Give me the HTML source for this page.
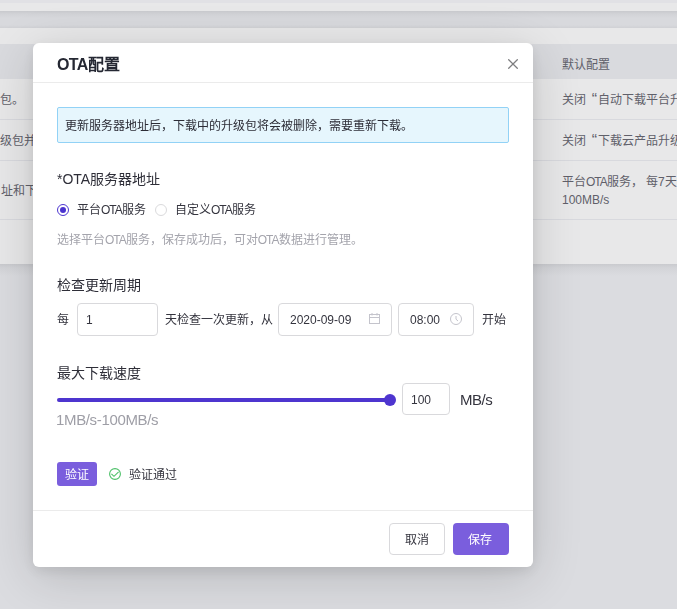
<!DOCTYPE html>
<html lang="zh-CN">
<head>
<meta charset="utf-8">
<style>
*{box-sizing:border-box;margin:0;padding:0}
html,body{width:677px;height:609px;overflow:hidden}
body{position:relative;background:#dbdce0;font-family:"Liberation Sans",sans-serif;font-size:12px;color:#34343e}
.abs{position:absolute;white-space:nowrap}
.bg{position:absolute;left:0;width:677px}
.t{position:absolute;white-space:nowrap;line-height:16px}
.modal{will-change:transform;position:absolute;left:33px;top:43px;width:500px;height:524px;background:#fff;border-radius:6px;box-shadow:0 4px 14px rgba(0,0,0,.09),0 10px 50px rgba(0,0,0,.16)}
.q{display:inline-block;width:12px;text-align:right;padding-right:1px;font-size:16px;line-height:16px;vertical-align:top}
.o{letter-spacing:-1px}
.box{position:absolute;border:1px solid #d9d9dc;border-radius:4px;background:#fff}
</style>
</head>
<body>
<!-- background page (under mask) -->
<div class="bg" style="top:0;height:3px;background:#e1e1e5"></div>
<div class="bg" style="top:3px;height:8px;background:#e8e8e9"></div>
<div class="bg" style="top:11px;height:17px;background:linear-gradient(#c8c9cd 0,#d2d3d7 3px,#d8d9dd 7px,#d8d9dd 14px,#d0d1d5 17px)"></div>
<div class="bg" style="top:28px;height:236px;background:#e8e8e9"></div>
<div class="bg" style="top:44px;height:35px;background:#d9dade"></div>
<div class="bg" style="top:119px;height:1px;background:#d8d9de"></div>
<div class="bg" style="top:160px;height:1px;background:#d8d9de"></div>
<div class="bg" style="top:219px;height:1px;background:#d8d9de"></div>
<div class="bg" style="top:264px;height:12px;background:linear-gradient(#c9cace 0,#d3d4d8 4px,#dbdce0 12px)"></div>

<div class="t" style="left:0;top:92px;color:#60606a">包。</div>
<div class="t" style="left:0;top:133px;color:#60606a">级包并</div>
<div class="t" style="left:1px;top:183px;color:#60606a">址和下</div>

<div class="t" style="left:562px;top:57px;color:#60606a">默认配置</div>
<div class="t" style="left:562px;top:92px;color:#60606a">关闭<span class="q">“</span>自动下载平台升级包</div>
<div class="t" style="left:562px;top:133px;color:#60606a">关闭<span class="q">“</span>下载云产品升级包</div>
<div class="t" style="left:562px;top:174px;color:#60606a">平台<span class="o">OTA</span>服务， 每7天</div>
<div class="t" style="left:562px;top:192px;color:#60606a">100MB/s</div>

<div class="modal">
  <div class="t" style="left:24px;top:12px;font-size:16px;line-height:20px;font-weight:bold;color:#252833"><span style="letter-spacing:-0.7px">OTA</span>配置</div>
  <svg class="abs" style="left:475px;top:16px" width="10" height="10" viewBox="0 0 10 10"><path d="M0.3 0.3L9.7 9.7M9.7 0.3L0.3 9.7" stroke="#7e7e80" stroke-width="1.25" fill="none"/></svg>
  <div class="abs" style="left:0;top:39px;width:500px;height:1px;background:#ebebeb"></div>

  <div class="abs" style="left:24px;top:64px;width:452px;height:36px;background:#e6f6fd;border:1px solid #92d2f6;border-radius:2px"></div>
  <div class="t" style="left:32.2px;top:75px;color:#2c2c36">更新服务器地址后，下载中的升级包将会被删除，需要重新下载。</div>

  <div class="t" style="left:24px;top:127px;font-size:14px;line-height:18px;color:#2e2e38">*OTA服务器地址</div>
  <div class="abs" style="left:24px;top:161px;width:12px;height:12px;border:1px solid #4d36d0;border-radius:50%"></div>
  <div class="abs" style="left:27px;top:164px;width:6px;height:6px;background:#4a33cf;border-radius:50%"></div>
  <div class="t" style="left:44px;top:159px;color:#34343e">平台<span class="o">OTA</span>服务</div>
  <div class="abs" style="left:122px;top:161px;width:12px;height:12px;border:1px solid #dadadc;border-radius:50%"></div>
  <div class="t" style="left:142px;top:159px;color:#34343e">自定义<span class="o">OTA</span>服务</div>
  <div class="t" style="left:24px;top:189px;color:#a4a4ac">选择平台<span class="o">OTA</span>服务，保存成功后，可对<span class="o">OTA</span>数据进行管理。</div>

  <div class="t" style="left:24px;top:233px;font-size:14px;line-height:18px;color:#2e2e38">检查更新周期</div>
  <div class="t" style="left:24px;top:269px">每</div>
  <div class="box" style="left:44px;top:260px;width:81px;height:33px"></div>
  <div class="t" style="left:53px;top:269px">1</div>
  <div class="t" style="left:131.5px;top:269px">天检查一次更新，从</div>
  <div class="box" style="left:245px;top:260px;width:114px;height:33px"></div>
  <div class="t" style="left:257px;top:269px">2020-09-09</div>
  <svg class="abs" style="left:336px;top:270px" width="11" height="11" viewBox="0 0 11 11"><rect x="0.5" y="1.5" width="10" height="9" fill="none" stroke="#c4c4cc"/><path d="M0.5 4.5H10.5M3 0V2.5M8 0V2.5" stroke="#c4c4cc" fill="none"/></svg>
  <div class="box" style="left:365px;top:260px;width:76px;height:33px"></div>
  <div class="t" style="left:377px;top:269px">08:00</div>
  <svg class="abs" style="left:417px;top:270px" width="12" height="12" viewBox="0 0 12 12"><circle cx="6" cy="6" r="5.5" fill="none" stroke="#c4c4cc"/><path d="M6 3V6.2L8 8" stroke="#c4c4cc" fill="none"/></svg>
  <div class="t" style="left:449px;top:269px">开始</div>

  <div class="t" style="left:24px;top:321px;font-size:14px;line-height:18px;color:#2e2e38">最大下载速度</div>
  <div class="abs" style="left:24px;top:355px;width:333px;height:4px;background:#4e35cf;border-radius:2px"></div>
  <div class="abs" style="left:351px;top:351px;width:12px;height:12px;background:#4e35cf;border-radius:50%"></div>
  <div class="box" style="left:369px;top:340px;width:48px;height:32px"></div>
  <div class="t" style="left:378px;top:349px">100</div>
  <div class="t" style="left:427px;top:348px;font-size:15px;line-height:18px;letter-spacing:-0.5px">MB/s</div>
  <div class="t" style="left:23px;top:368px;font-size:15px;line-height:18px;letter-spacing:-0.35px;color:#9e9ea6">1MB/s-100MB/s</div>

  <div class="abs" style="left:24px;top:419px;width:40px;height:24px;background:#7a5edd;border-radius:3px"></div>
  <div class="t" style="left:32px;top:424px;color:#fff">验证</div>
  <svg class="abs" style="left:76px;top:425px" width="12" height="12" viewBox="0 0 12 12"><circle cx="6" cy="6" r="5.4" fill="none" stroke="#4cc068" stroke-width="1.1"/><path d="M2.4 5.8L5 8.3L9.6 3.9" stroke="#4cc068" stroke-width="1.1" fill="none"/></svg>
  <div class="t" style="left:96px;top:424px">验证通过</div>

  <div class="abs" style="left:0;top:467px;width:500px;height:1px;background:#ebebeb"></div>
  <div class="box" style="left:356px;top:480px;width:56px;height:32px"></div>
  <div class="t" style="left:372px;top:489px">取消</div>
  <div class="abs" style="left:420px;top:480px;width:56px;height:32px;background:#7a5edd;border-radius:4px"></div>
  <div class="t" style="left:435px;top:489px;color:#fff">保存</div>
</div>
</body>
</html>
